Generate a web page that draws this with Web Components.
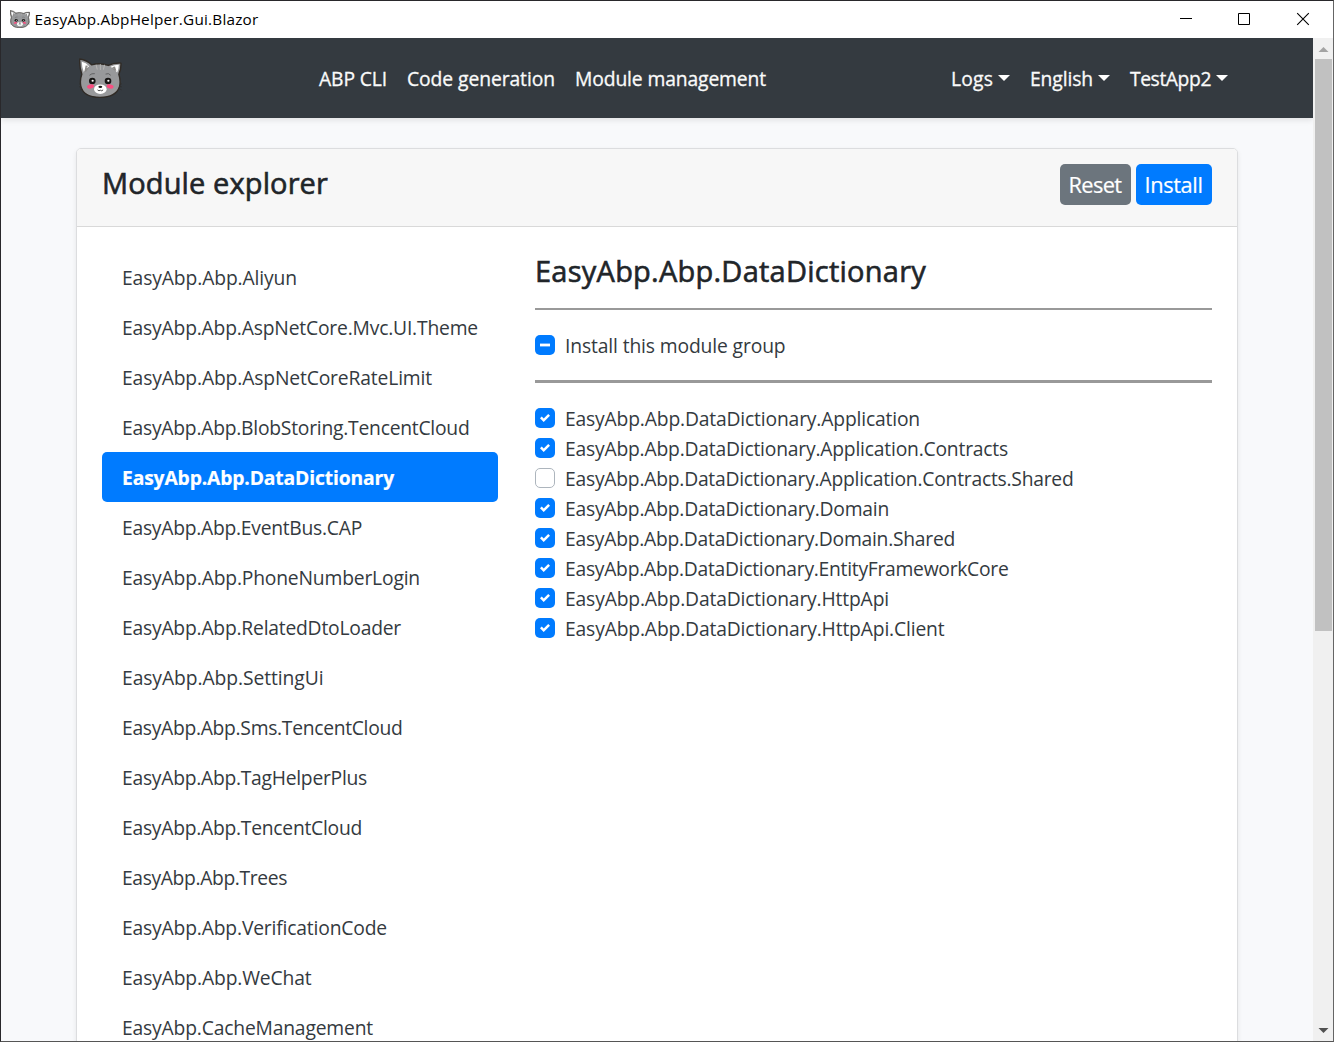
<!DOCTYPE html>
<html lang="en">
<head>
<meta charset="utf-8">
<title>EasyAbp.AbpHelper.Gui.Blazor</title>
<style>
html,body{margin:0;height:100%;overflow:hidden;font-family:"Open Sans","Noto Sans",sans-serif;color:#212529}
</style>
</head>
<body>
<app-window></app-window>
<script>
const define=(name,html,setup)=>customElements.define(name,class extends HTMLElement{
  connectedCallback(){
    if(this.shadowRoot)return;
    this.attachShadow({mode:'open'}).innerHTML=html;
    if(setup)setup(this,this.shadowRoot);
  }
});

/* Single line of text whose tracking is adjusted to the advance width in "w". */
define('fit-text','<style>:host{display:block;white-space:nowrap}span{display:inline-block}</style><span></span>',(el,root)=>{
  const s=root.querySelector('span');
  s.textContent=el.getAttribute('text');
  const w=+el.getAttribute('w');
  el.style.width=w+'px';
  const n=s.textContent.length;
  s.style.letterSpacing=((w-1-s.getBoundingClientRect().width)/n)+'px';
});

define('cat-logo',`<style>:host{display:block;flex:none}svg{display:block;width:100%;height:100%}</style>
<svg viewBox="30 29 123 118" preserveAspectRatio="none">
<g stroke="#302c28" stroke-width="1.6" fill="none"><path d="M44 108l-13-3M44 113l-14 1M45 118l-12 5M141 108l12-3M141 113l13 1M140 118l12 5"/></g>
<path d="M32 32Q53 35 66 49Q90 42 114 51Q128 43 150 44Q151 62 144 77Q150 96 146 113C139 136 118 145 90 145C62 145 40 135 35 111Q32 93 38 77Q31 57 32 32Z" fill="#98999b" stroke="#302b26" stroke-width="4" stroke-linejoin="round"/>
<path d="M38 40Q50 42 59 53Q49 59 44 71Q38 56 38 40ZM144 49Q131 49 120 55Q133 61 139 72Q144 60 144 49Z" fill="#fff"/>
<path d="M49 51l7 1-5 7 8-3-8 13-6 2zM133 54l-9 2 6 3-7 0 9 7 5 1z" fill="#8b8987"/>
<g stroke="#b5b4b2" stroke-width="3" stroke-linecap="round"><path d="M79 50l3 12M91 48v15M103 50l-3 12"/></g>
<g stroke="#59595a" stroke-width="2.5" fill="none" stroke-linecap="round"><path d="M61 79Q66 74 74 75M107 76Q115 72 120 79"/></g>
<g fill="#171615"><circle cx="68" cy="97" r="9.5"/><circle cx="113" cy="97" r="9.5"/></g>
<g fill="#fff"><circle cx="69" cy="96" r="3.2"/><circle cx="114" cy="96" r="3.2"/><ellipse cx="91" cy="121" rx="18" ry="14"/></g>
<g fill="#fa4d80"><ellipse cx="63" cy="113" rx="10" ry="6" transform="rotate(-12 63 113)"/><ellipse cx="119" cy="113" rx="10" ry="6" transform="rotate(12 119 113)"/></g>
<ellipse cx="91" cy="114" rx="5.5" ry="3.5" fill="#171615"/><path d="M83 123Q87 128 91 124Q95 128 99 123" fill="none" stroke="#333" stroke-width="2.5"/>
</svg>`);

define('title-bar',`<style>
:host{display:flex;height:37px;background:#fff;color:#000;align-items:center;font-size:15.3px;padding:0 1px 0 9px;box-sizing:border-box}
cat-logo{width:20px;height:18px;margin:-1px 4.500px 0 0}
fit-text{margin-top:-1px}
.g{flex:1}svg{width:58px;height:37px;flex:none;display:block}
</style><cat-logo></cat-logo><fit-text w="225" text="EasyAbp.AbpHelper.Gui.Blazor"></fit-text><div class="g"></div>
<svg viewBox="0 0 58 37"><path d="M22 17.5h12" stroke="#000"/></svg>
<svg viewBox="0 0 58 37"><path d="M22.5 12.5h11v11h-11z" fill="none" stroke="#000"/></svg>
<svg viewBox="0 0 58 37"><path d="M23.2 12.2l11.6 11.6M34.8 12.2l-11.6 11.6" stroke="#000" stroke-width="1.1"/></svg>`);

define('nav-link',`<style>
:host{display:flex;align-items:center;color:#fafafa;font-size:19.3px;line-height:30px;-webkit-text-stroke:.3px currentColor}
i{display:none;border:6px solid transparent;border-top-color:#fff;border-bottom:0;margin:-3px 0 0 4px}
:host([dropdown]) i{display:block}
</style><fit-text></fit-text><i></i>`,(el,root)=>{
  const t=document.createElement('fit-text');
  t.setAttribute('text',el.getAttribute('text'));t.setAttribute('w',el.getAttribute('w'));
  root.querySelector('fit-text').replaceWith(t);
});

define('nav-bar',`<style>
:host{display:flex;box-sizing:border-box;height:80px;background:#343a40;align-items:center;padding:2px 85px 0 77.5px;box-shadow:0 2px 6px rgba(0,0,0,.1);position:relative}
cat-logo{width:43px;height:40px;margin-top:-3px}
.l{display:flex;gap:19px;margin-left:197.5px;flex:1}.r{display:flex;gap:20px}
</style><cat-logo></cat-logo>
<div class="l"><nav-link text="ABP CLI" w="69"></nav-link><nav-link text="Code generation" w="149"></nav-link><nav-link text="Module management" w="192"></nav-link></div>
<div class="r"><nav-link dropdown text="Logs" w="43"></nav-link><nav-link dropdown text="English" w="64"></nav-link><nav-link dropdown text="TestApp2" w="82"></nav-link></div>`);

define('ui-button',`<style>
:host{display:flex;align-items:center;justify-content:center;box-sizing:border-box;height:41px;border-radius:5px;background:#6c757d;color:#fff;font-size:21.8px;line-height:30px;-webkit-text-stroke:.2px currentColor}
:host([primary]){background:#007bff}
</style><slot></slot>`);

define('module-item',`<style>
:host{display:flex;align-items:center;height:50px;box-sizing:border-box;padding:2px 0 0 20px;border-radius:5px;font-size:19.3px;line-height:30px;color:#343a40}
:host([active]){background:#007bff;color:#fff;font-weight:700;-webkit-text-stroke:.2px currentColor}
</style><slot></slot>`);

define('check-row',`<style>
:host{display:flex;height:30px;gap:10px;font-size:19.3px;line-height:30px;color:#343a40}
svg{width:20px;height:20px;margin-top:4px;flex:none}
</style><svg viewBox="0 0 20 20"></svg><slot></slot>`,(el,root)=>{
  const s=el.getAttribute('state');
  root.querySelector('svg').innerHTML=s==='off'
    ?'<rect x=".5" y=".5" width="19" height="19" rx="4.5" fill="#fff" stroke="#adb5bd"/>'
    :'<rect width="20" height="20" rx="5" fill="#007bff"/>'+(s==='mixed'
      ?'<path d="M5 10h10" stroke="#fff" stroke-width="2.8"/>'
      :'<path transform="translate(5 5) scale(1.25)" fill="#fff" d="M6.564.75l-3.59 3.612-1.538-1.55L0 4.26l2.974 2.99L8 2.193z"/>');
});

define('module-card',`<style>
:host{display:flex;flex-direction:column;box-sizing:border-box;width:1162px;height:1200px;background:#fff;border:1px solid #dcdddf;border-radius:5px;box-shadow:0 2px 5px rgba(0,0,0,.075);overflow:hidden}
header{display:flex;box-sizing:border-box;height:78px;flex:none;background:#f7f7f7;border-bottom:1px solid #d9d9d9;padding:15px 25px 0;gap:5px}
header>fit-text,section>fit-text{font-size:29px;line-height:40px;margin-top:-1px;-webkit-text-stroke:.6px currentColor}
.g{flex:1}
main{display:flex;padding:25px 25px 0;gap:37px}
nav{width:396px}
section{width:677px;padding-top:1px;margin-top:-1px}
.h{background:#999;height:2px;margin:17px 0 21px}
.h2{height:3px;margin:19px 0 21px}
</style><header><fit-text w="227" text="Module explorer"></fit-text><div class="g"></div>
<ui-button style="width:71px"><fit-text w="54" text="Reset"></fit-text></ui-button><ui-button primary style="width:76px"><fit-text w="59" text="Install"></fit-text></ui-button></header>
<main><nav></nav><section><fit-text w="392" text="EasyAbp.Abp.DataDictionary"></fit-text><div class="h"></div>
<check-row state="mixed"><fit-text w="221.5" text="Install this module group"></fit-text></check-row><div class="h h2"></div><div class="list"></div></section></main>`,(el,root)=>{
  root.querySelector('nav').innerHTML=[['Abp.Aliyun',176],['Abp.AspNetCore.Mvc.UI.Theme',357],['Abp.AspNetCoreRateLimit',311],['Abp.BlobStoring.TencentCloud',348.5],['Abp.DataDictionary',273],['Abp.EventBus.CAP',241],['Abp.PhoneNumberLogin',299],['Abp.RelatedDtoLoader',280],['Abp.SettingUi',202.5],['Abp.Sms.TencentCloud',281.5],['Abp.TagHelperPlus',246],['Abp.TencentCloud',241],['Abp.Trees',166],['Abp.VerificationCode',266],['Abp.WeChat',190.5],['CacheManagement',252]]
    .map(([t,w],i)=>`<module-item${i===4?' active':''}><fit-text w="${w}" text="EasyAbp.${t}"></fit-text></module-item>`).join('');
  root.querySelector('.list').innerHTML=[['Application',356],['Application.Contracts',444],['Application.Contracts.Shared',509.5],['Domain',325],['Domain.Shared',391],['EntityFrameworkCore',444.5],['HttpApi',325],['HttpApi.Client',380.5]]
    .map(([t,w],i)=>`<check-row state="${i===2?'off':'on'}"><fit-text w="${w}" text="EasyAbp.Abp.DataDictionary.${t}"></fit-text></check-row>`).join('');
});

define('scroll-bar',`<style>
:host{display:flex;flex-direction:column;width:20px;background:#f0f0f0;flex:none}
svg{display:block;width:20px;height:21px}.t{flex:1}.b{width:17px;height:572px;margin-left:2px;background:#c1c1c1}
</style><svg viewBox="0 0 20 21"><path d="M5.5 14l5-5 5 5z" fill="#a3a3a3"/></svg><div class="t"><div class="b"></div></div><svg viewBox="0 0 20 21"><path d="M5.500 8h10l-5 5z" fill="#505050"/></svg>`);

define('app-window',`<style>
:host{display:flex;flex-direction:column;box-sizing:border-box;width:1334px;height:1042px;border:1px solid #29282b;border-right-color:#656565;border-bottom-color:#555;overflow:hidden}
.v{display:flex;flex:1;min-height:0}
.p{flex:1;min-width:0;overflow:hidden;background:#f8f9fb}
.c{padding:30px 0 0 75px}
</style><title-bar></title-bar><div class="v"><div class="p"><nav-bar></nav-bar><div class="c"><module-card></module-card></div></div><scroll-bar></scroll-bar></div>`);
</script>
</body>
</html>
